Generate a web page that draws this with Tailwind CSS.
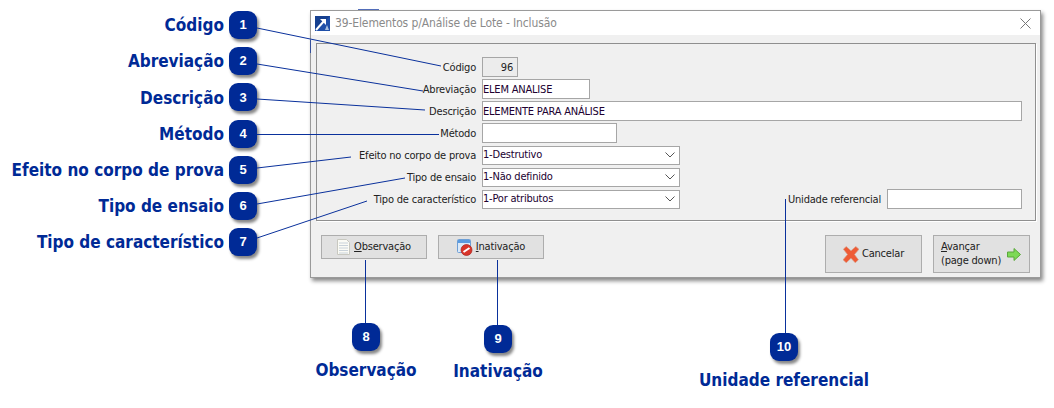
<!DOCTYPE html>
<html lang="pt-BR">
<head>
  <meta charset="UTF-8" />
  <title>39-Elementos p/Análise de Lote - Inclusão</title>
  <script src="https://cdn.jsdelivr.net/npm/@tailwindcss/browser@4"></script>
</head>
<body class="bg-white font-['DejaVu_Sans_Condensed','DejaVu_Sans',sans-serif]">
<div class="relative w-[1054px] h-[408px] overflow-hidden">

  <!-- callouts on the left -->
  <div class="w-[257px] pt-[11px] flex flex-col gap-[8.2px] text-[17px] font-bold text-[#002a96] whitespace-nowrap">
    <div class="h-[28px] flex items-center justify-end gap-[5px]"><span class="pt-[2px]">Código</span><span class="w-[28px] h-[28px] rounded-[9px] bg-[#002a96] shadow-[2px_3px_3px_#888] text-white text-[13px] font-['Liberation_Sans',sans-serif] flex items-center justify-center">1</span></div>
    <div class="h-[28px] flex items-center justify-end gap-[5px]"><span class="pt-[2px]">Abreviação</span><span class="w-[28px] h-[28px] rounded-[9px] bg-[#002a96] shadow-[2px_3px_3px_#888] text-white text-[13px] font-['Liberation_Sans',sans-serif] flex items-center justify-center">2</span></div>
    <div class="h-[28px] flex items-center justify-end gap-[5px]"><span class="pt-[2px]">Descrição</span><span class="w-[28px] h-[28px] rounded-[9px] bg-[#002a96] shadow-[2px_3px_3px_#888] text-white text-[13px] font-['Liberation_Sans',sans-serif] flex items-center justify-center">3</span></div>
    <div class="h-[28px] flex items-center justify-end gap-[5px]"><span class="pt-[2px]">Método</span><span class="w-[28px] h-[28px] rounded-[9px] bg-[#002a96] shadow-[2px_3px_3px_#888] text-white text-[13px] font-['Liberation_Sans',sans-serif] flex items-center justify-center">4</span></div>
    <div class="h-[28px] flex items-center justify-end gap-[5px]"><span class="pt-[2px]">Efeito no corpo de prova</span><span class="w-[28px] h-[28px] rounded-[9px] bg-[#002a96] shadow-[2px_3px_3px_#888] text-white text-[13px] font-['Liberation_Sans',sans-serif] flex items-center justify-center">5</span></div>
    <div class="h-[28px] flex items-center justify-end gap-[5px]"><span class="pt-[2px]">Tipo de ensaio</span><span class="w-[28px] h-[28px] rounded-[9px] bg-[#002a96] shadow-[2px_3px_3px_#888] text-white text-[13px] font-['Liberation_Sans',sans-serif] flex items-center justify-center">6</span></div>
    <div class="h-[28px] flex items-center justify-end gap-[5px]"><span class="pt-[2px]">Tipo de característico</span><span class="w-[28px] h-[28px] rounded-[9px] bg-[#002a96] shadow-[2px_3px_3px_#888] text-white text-[13px] font-['Liberation_Sans',sans-serif] flex items-center justify-center">7</span></div>
  </div>

  <!-- dialog window -->
  <div class="absolute left-[310px] top-[10px] w-[731px] h-[268px] border border-[#9a9a9a] bg-[#f0f0f0] shadow-[2px_3px_4px_#888] text-[11px] tracking-[-0.2px] text-[#222]">
    <div class="h-[24px] bg-white flex items-center pl-[4px] pr-[9px] text-[12px] tracking-[-0.12px] text-[#8a8a8a]">
      <svg class="w-[15px] h-[15px] mr-[5px]" viewBox="0 0 15 15">
        <rect width="15" height="15" fill="#1f4fa8"/>
        <path d="M0 0H15L0 15Z" fill="#16408f"/>
        <path d="M1 14L9 5" stroke="#fff" stroke-width="2"/>
        <path d="M5 3H11V9Z" fill="#fff"/>
        <path d="M10 14L12 9L14 14Z" fill="#a9c0e0"/>
      </svg>
      <span>39-Elementos p/Análise de Lote - Inclusão</span>
      <svg class="ml-auto w-[11px] h-[11px]" viewBox="0 0 11 11"><path d="M0.5 0.5L10.5 10.5M10.5 0.5L0.5 10.5" stroke="#777" fill="none"/></svg>
    </div>

    <div class="mt-[8px] ml-[5px] w-[720px] h-[178px] border border-[#8f8f8f] shadow-[1px_1px_0_#fff] pt-[13px] pr-[13px] flex flex-col gap-[2px]">
      <div class="flex items-center gap-[6px] h-[20px]">
        <span class="w-[159px] text-right pt-[2px]">Código</span>
        <div class="w-[36px] h-[20px] border border-[#a6a6a6] bg-[#ececec] text-right px-[4px] leading-[20px]">96</div>
      </div>
      <div class="flex items-center gap-[6px] h-[20px]">
        <span class="w-[159px] text-right pt-[2px]">Abreviação</span>
        <div class="w-[108px] h-[20px] border border-[#a6a6a6] bg-white text-[#200030] leading-[20px]">ELEM ANALISE</div>
      </div>
      <div class="flex items-center gap-[6px] h-[20px]">
        <span class="w-[159px] text-right pt-[2px]">Descrição</span>
        <div class="flex-1 h-[20px] border border-[#a6a6a6] bg-white text-[#200030] leading-[20px]">ELEMENTE PARA ANÁLISE</div>
      </div>
      <div class="flex items-center gap-[6px] h-[20px]">
        <span class="w-[159px] text-right pt-[2px]">Método</span>
        <div class="w-[135px] h-[20px] border border-[#a6a6a6] bg-white"></div>
      </div>
      <div class="flex items-center gap-[6px] h-[20px]">
        <span class="w-[159px] text-right pt-[2px]">Efeito no corpo de prova</span>
        <div class="w-[198px] h-[19px] border border-[#a6a6a6] bg-white text-[#200030] leading-[16px] flex items-center justify-between pr-[4px]">
          <span>1-Destrutivo</span>
          <svg class="w-[10px] h-[6px]" viewBox="0 0 10 6"><path d="M0.5 0.5L5 5L9.5 0.5" stroke="#555" fill="none"/></svg>
        </div>
      </div>
      <div class="flex items-center gap-[6px] h-[20px]">
        <span class="w-[159px] text-right pt-[2px]">Tipo de ensaio</span>
        <div class="w-[198px] h-[19px] border border-[#a6a6a6] bg-white text-[#200030] leading-[16px] flex items-center justify-between pr-[4px]">
          <span>1-Não definido</span>
          <svg class="w-[10px] h-[6px]" viewBox="0 0 10 6"><path d="M0.5 0.5L5 5L9.5 0.5" stroke="#555" fill="none"/></svg>
        </div>
      </div>
      <div class="flex items-center gap-[6px] h-[20px]">
        <span class="w-[159px] text-right pt-[2px]">Tipo de característico</span>
        <div class="w-[198px] h-[19px] border border-[#a6a6a6] bg-white text-[#200030] leading-[16px] flex items-center justify-between pr-[4px]">
          <span>1-Por atributos</span>
          <svg class="w-[10px] h-[6px]" viewBox="0 0 10 6"><path d="M0.5 0.5L5 5L9.5 0.5" stroke="#555" fill="none"/></svg>
        </div>
        <span class="ml-auto pt-[2px]">Unidade referencial</span>
        <div class="w-[135px] h-[20px] border border-[#a6a6a6] bg-white"></div>
      </div>
    </div>

    <div class="mt-[14px] pl-[10px] pr-[10px] flex items-start">
      <button class="w-[106px] h-[24px] border border-[#adadad] bg-[#e1e1e1] flex items-center justify-center gap-[4px]">
        <svg class="w-[13px] h-[16px]" viewBox="0 0 13 16">
          <path d="M0.5 0.5H9.5L12.5 3.5V15.5H0.5Z" fill="#fbfbf5" stroke="#c8c8c0"/>
          <path d="M2 4H11M2 6.5H11M2 9H11M2 11.5H11M2 14H11" stroke="#c9d2da"/>
        </svg>
        <span><u>O</u>bservação</span>
      </button>
      <button class="ml-[11px] w-[106px] h-[24px] border border-[#adadad] bg-[#e1e1e1] flex items-center justify-center gap-[3px]">
        <svg class="w-[16px] h-[17px]" viewBox="0 0 16 17">
          <rect x="0.5" y="0.5" width="13" height="13" rx="1" fill="#dbe9f8" stroke="#6d9fd6"/>
          <rect x="1" y="1" width="12" height="3" fill="#5a9be0"/>
          <circle cx="9.5" cy="11" r="5.5" fill="#d8352a" stroke="#a8201a" stroke-width="0.7"/>
          <path d="M6.5 13L12.5 9" stroke="#fff" stroke-width="2"/>
        </svg>
        <span><u>I</u>nativação</span>
      </button>
      <button class="ml-auto w-[97px] h-[38px] border border-[#adadad] bg-[#e1e1e1] flex items-center justify-center gap-[3px]">
        <svg class="w-[16px] h-[17px]" viewBox="0 0 15 16">
          <path d="M3 0.5L7.5 4.5L12 0.5L15 3L10.8 8L14.5 13L11.5 15.8L7.5 11.5L3 15.8L0 13L4.2 8L0.3 3Z" fill="#ee5b35" stroke="#d6a08c" stroke-width="0.6"/>
        </svg>
        <span>Cancelar</span>
      </button>
      <button class="ml-[11px] w-[97px] h-[38px] border border-[#adadad] bg-[#e1e1e1] flex items-center pl-[7px] pr-[8px] text-left leading-[14px]">
        <span><u>A</u>vançar<br>(page down)</span>
        <svg class="ml-auto w-[14px] h-[13px]" viewBox="0 0 14 13">
          <path d="M0.5 4H7V0.5L13.5 6.5L7 12.5V9H0.5Z" fill="#7ed957" stroke="#5aa83a"/>
        </svg>
      </button>
    </div>
  </div>

  <!-- leader lines -->
  <svg class="absolute left-0 top-0 w-[1054px] h-[408px] pointer-events-none" viewBox="0 0 1054 408" fill="none" stroke="#0a319c">
    <path d="M257 28L441 66"/>
    <path d="M257 64L423 91"/>
    <path d="M257 99L425 110"/>
    <path d="M257 134.5H439"/>
    <path d="M257 168L351 157"/>
    <path d="M257 204L405 178"/>
    <path d="M257 238L367 201"/>
    <path d="M365.5 260V323"/>
    <path d="M497.5 260V325"/>
    <path d="M785.5 199V333"/>
    <path d="M358 9.5H379M310.5 40V53" stroke-opacity="0.7"/>
  </svg>

  <!-- callouts under the window -->
  <div class="absolute left-[266px] top-[323px] w-[200px] flex flex-col items-center text-[17px] font-bold text-[#002a96]">
    <span class="w-[28px] h-[28px] rounded-[9px] bg-[#002a96] shadow-[2px_3px_3px_#888] text-white text-[13px] font-['Liberation_Sans',sans-serif] flex items-center justify-center">8</span>
    <span class="mt-[7px]">Observação</span>
  </div>
  <div class="absolute left-[398px] top-[325px] w-[200px] flex flex-col items-center text-[17px] font-bold text-[#002a96]">
    <span class="w-[28px] h-[28px] rounded-[9px] bg-[#002a96] shadow-[2px_3px_3px_#888] text-white text-[13px] font-['Liberation_Sans',sans-serif] flex items-center justify-center">9</span>
    <span class="mt-[6px]">Inativação</span>
  </div>
  <div class="absolute left-[684px] top-[333px] w-[200px] flex flex-col items-center text-[17px] font-bold text-[#002a96]">
    <span class="w-[28px] h-[28px] rounded-[9px] bg-[#002a96] shadow-[2px_3px_3px_#888] text-white text-[13px] font-['Liberation_Sans',sans-serif] flex items-center justify-center">10</span>
    <span class="mt-[7px]">Unidade referencial</span>
  </div>
</div>
</body>
</html>
